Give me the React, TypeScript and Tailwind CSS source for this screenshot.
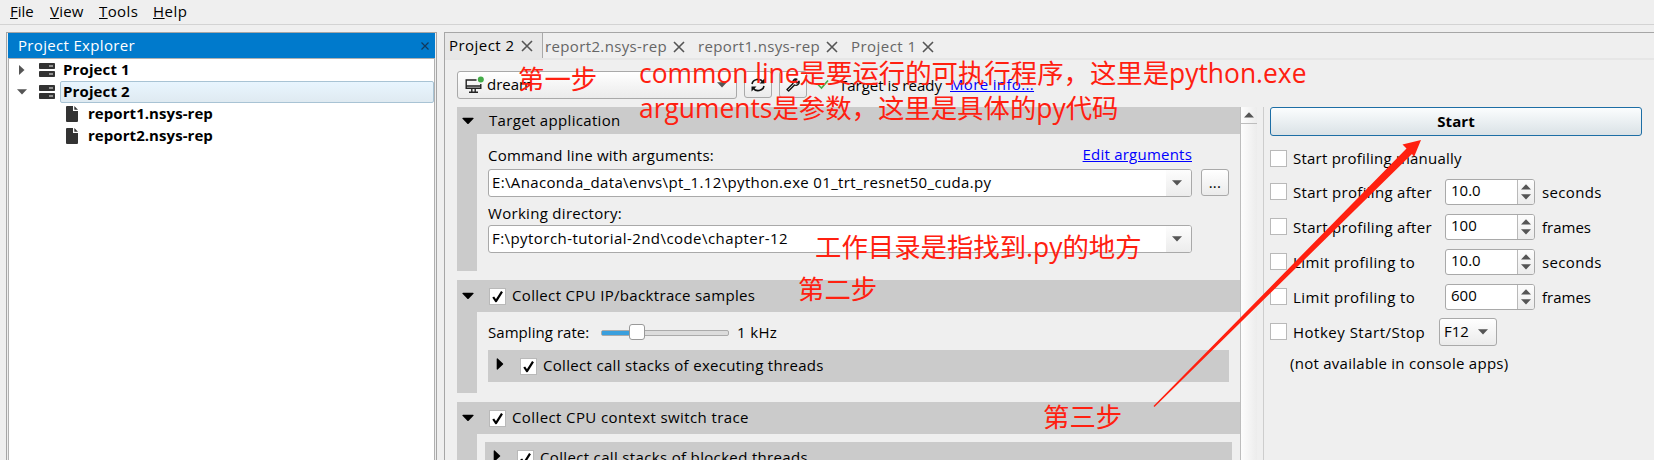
import React from "react";

const T = ({ c = "", children }: { c?: string; children: React.ReactNode }) => (
  <span className={"inline-block -translate-y-px whitespace-pre " + c}>{children}</span>
);
const Note = ({ c, children }: { c: string; children: React.ReactNode }) => (
  <span className={"absolute whitespace-pre " + c}>{children}</span>
);

const Down = ({ c = "text-[#555]" }: { c?: string }) => (
  <svg className={"shrink-0 " + c} width="10" height="6" viewBox="0 0 10 6"><path d="M0 0.3H10L5 5.5Z" fill="currentColor" /></svg>
);
const Up = () => (
  <svg className="shrink-0 text-[#555]" width="10" height="6" viewBox="0 0 10 6"><path d="M0 5.5H10L5 0.3Z" fill="currentColor" /></svg>
);
const BigDown = () => (
  <svg className="shrink-0" width="12" height="8" viewBox="0 0 12 8"><path d="M0.3 1.4Q0.3 0.7 1.2 0.7H10.8Q11.7 0.7 11.7 1.4L6.4 6.9Q6 7.2 5.6 6.9Z" fill="#000" /></svg>
);
const BigRight = () => (
  <svg className="shrink-0" width="8" height="12" viewBox="0 0 8 12"><path d="M1.4 0.3Q0.7 0.3 0.7 1V11Q0.7 11.7 1.4 11.7L7 6.4Q7.5 6 7 5.6Z" fill="#000" /></svg>
);
const Cross = () => (
  <svg className="shrink-0" width="12" height="12" viewBox="0 0 12 12"><path d="M1 1L11 11M11 1L1 11" stroke="#555" strokeWidth="1.6" fill="none" /></svg>
);
const Check = ({ on = false }: { on?: boolean }) => (
  <span className="flex h-[17px] w-[17px] shrink-0 items-center justify-center border border-[#b9b9b9] bg-white">
    {on && <svg width="13" height="13" viewBox="0 0 13 13"><path d="M2.2 7L5 11.2L11 1.6" stroke="#000" strokeWidth="2.2" fill="none" strokeLinejoin="round" /></svg>}
  </span>
);
const Server = () => (
  <svg className="shrink-0" width="16" height="14" viewBox="0 0 16 14">
    <rect width="16" height="6" rx="0.8" fill="#333" /><rect y="8" width="16" height="6" rx="0.8" fill="#333" />
    <rect x="10" y="2.2" width="4" height="1.6" fill="#aaa" /><rect x="10" y="10.2" width="4" height="1.6" fill="#aaa" />
  </svg>
);
const FileIcon = () => (
  <svg className="shrink-0" width="12" height="16" viewBox="0 0 12 16">
    <path d="M1 0H7V5H12V15Q12 16 11 16H1Q0 16 0 15V1Q0 0 1 0Z" fill="#333" /><path d="M8.3 0L12 3.8H8.3Z" fill="#333" />
  </svg>
);

const Combo = ({ text, c }: { text: string; c: string }) => (
  <div className="flex h-7 w-[704px] overflow-hidden rounded-[3px] border border-[#a9a9a9] bg-white">
    <div className="flex flex-1 items-center pl-[3px]"><T c={c}>{text}</T></div>
    <div className="flex w-[25px] items-center justify-center bg-gradient-to-b from-[#fdfdfd] to-[#ececec] pr-1"><Down /></div>
  </div>
);

const Spin = ({ v }: { v: string }) => (
  <div className="flex h-[26px] w-[90px] overflow-hidden rounded-[3px] border border-[#a9a9a9] bg-white">
    <div className="flex w-[71px] items-center pl-[5px] pb-px"><T>{v}</T></div>
    <div className="flex flex-1 flex-col items-center justify-center gap-1 border-l border-[#b9b9b9] bg-gradient-to-b from-[#fdfdfd] to-[#ececec]"><Up /><Down /></div>
  </div>
);

const Option = ({ label, c, v, unit, uc }: { label: string; c: string; v: string; unit: string; uc: string }) => (
  <div className="flex h-[35px] items-center">
    <div className="flex w-[175px] items-center gap-1.5"><Check /><T c={"pt-0.5 " + c}>{label}</T></div>
    <Spin v={v} />
    <T c={"ml-[7px] pt-0.5 " + uc}>{unit}</T>
  </div>
);

export default function App() {
  return (
    <div className="relative flex h-[460px] w-[1654px] flex-col overflow-hidden bg-[#efefef] font-['Open_Sans','Noto_Sans_CJK_SC',sans-serif] text-[15px] leading-5 text-black">
      <div className="flex h-[25px] shrink-0 gap-[14px] border-b border-[#d3d3d3] pl-[10px] pt-[2px]">
        <T c="w-[26px]"><u>F</u>ile</T>
        <T c="w-[35px] tracking-[0.2px]"><u>V</u>iew</T>
        <T c="w-10 tracking-[0.4px]"><u>T</u>ools</T>
        <T c="w-9 tracking-[0.5px]"><u>H</u>elp</T>
      </div>
      <div className="flex flex-1 gap-[7px] pl-[6px] pt-[7px]">
        <div className="flex w-[431px] flex-col border border-b-0 border-[#a6a6a6] px-px">
          <div className="flex h-[25px] items-center justify-between bg-[#007acc] pl-[10px] pr-[6px] text-white">
            <T c="tracking-[0.33px]">Project Explorer</T>
            <svg width="8" height="8" viewBox="0 0 8 8"><path d="M0.5 0.5L7.5 7.5M7.5 0.5L0.5 7.5" stroke="#12395c" strokeWidth="1.2" /></svg>
          </div>
          <div className="flex flex-1 flex-col border border-b-0 border-[#b0b0b0] bg-white font-bold">
            <div className="flex h-[22px] items-center pl-[10px]">
              <svg width="6" height="10" viewBox="0 0 6 10"><path d="M0 0V10L5.5 5Z" fill="#555" /></svg>
              <span className="ml-[14px]"><Server /></span><T c="ml-[8px] tracking-[0.12px]">Project 1</T>
            </div>
            <div className="flex h-[22px] items-center pl-2">
              <Down /><span className="ml-3"><Server /></span>
              <div className="ml-[5px] flex h-[22px] flex-1 items-center rounded-[2px] border border-[#a8c3d4] bg-gradient-to-b from-[#e8f5fe] to-[#dfeaf1] pl-[2px]"><T c="tracking-[0.12px]">Project 2</T></div>
            </div>
            <div className="flex h-[22px] items-center pl-[57px]"><FileIcon /><T c="ml-[10px] tracking-[0.06px]">report1.nsys-rep</T></div>
            <div className="flex h-[22px] items-center pl-[57px]"><FileIcon /><T c="ml-[10px] tracking-[0.06px]">report2.nsys-rep</T></div>
          </div>
        </div>

        <div className="flex flex-1 flex-col border-l border-t border-[#a6a6a6]">
          <div className="flex h-[27px] shrink-0 items-center border-b-2 border-[#e6e6e6] text-[#666]">
            <div className="flex h-full w-[98px] items-center border-r border-[#a9a9a9] bg-[#e7e7e7] pl-1 text-black"><T c="w-[72px] tracking-[0.45px]">Project 2</T><Cross /></div>
            <div className="flex items-center pl-[2px] pt-0.5"><T c="w-[128px] tracking-[0.36px]">report2.nsys-rep</T><Cross /></div>
            <div className="flex items-center pl-[13px] pt-0.5"><T c="w-[128px] tracking-[0.36px]">report1.nsys-rep</T><Cross /></div>
            <div className="flex items-center pl-[13px] pt-0.5"><T c="w-[71px] tracking-[0.45px]">Project 1</T><Cross /></div>
          </div>
          <div className="flex h-[47px] shrink-0 pl-3 pt-[11px]">
            <div className="flex h-7 w-[280px] items-center rounded-[3px] border border-[#a9a9a9] bg-gradient-to-b from-white to-[#ebebeb] pl-[7px] pr-[9px]">
              <svg width="20" height="18" viewBox="0 0 20 18"><path d="M11.5 4H1.2V12.2H15.8V8M1.2 10H15.8M6.8 12.5V16M10.2 12.5V16M4 16.2H13" stroke="#222" strokeWidth="1.4" fill="none" /><circle cx="15.8" cy="3.4" r="3" fill="#43ab47" /></svg>
              <T c="ml-0.5 flex-1">dream</T><Down />
            </div>
            <div className="ml-[7px] flex h-[27px] w-7 items-center justify-center rounded-[3px] border border-[#a9a9a9] bg-gradient-to-b from-white to-[#ebebeb]">
              <svg width="14" height="14" viewBox="0 0 14 14"><path d="M1 6A6 5.5 0 0 1 12 4M13 8A6 5.5 0 0 1 2 10" stroke="#111" strokeWidth="1.6" fill="none" /><path d="M13.5 0.5V5.5H8.5ZM0.5 13.5V8.5H5.5Z" fill="#111" /></svg>
            </div>
            <div className="ml-[7px] flex h-[27px] w-7 items-center justify-center rounded-[3px] border border-[#a9a9a9] bg-gradient-to-b from-white to-[#ebebeb]">
              <svg width="14" height="14" viewBox="0 0 14 14"><path d="M1 11.5L7 5.5A3.2 3.2 0 0 1 10.8 1.2L9 3L11 5L13 3.2A3.2 3.2 0 0 1 8.5 7L2.6 13Z" stroke="#111" strokeWidth="1.4" fill="none" strokeLinejoin="round" /></svg>
            </div>
            <svg className="ml-[9px] mt-[7px]" width="13" height="13" viewBox="0 0 13 13"><path d="M1 5.5L5.5 10L12 2.5" stroke="#43ab47" strokeWidth="1.6" fill="none" /></svg>
            <T c="ml-[10px] mt-[5px] w-[111px]">Target is ready</T>
            <T c="mt-1 text-[#0000ff] underline tracking-[0.35px]">More info...</T>
          </div>

          <div className="flex flex-1 pl-3">
            <div className="flex h-[353px] w-[783px] flex-col overflow-hidden">
              <div className="flex h-[164px] shrink-0 border-l-[20px] border-[#cbcbcb] bg-[#efefef]">
                <div className="flex w-[763px] flex-col">
                  <div className="-ml-[15px] flex h-[27px] items-center bg-[#cbcbcb]"><BigDown /><T c="ml-[15px] tracking-[0.33px]">Target application</T></div>
                  <div className="flex h-[35px] w-[715px] justify-between pl-[11px] pt-[11px]"><T c="mt-px tracking-[0.23px]">Command line with arguments:</T><T c="text-[#0000ff] underline tracking-[0.22px]">Edit arguments</T></div>
                  <div className="flex gap-[9px] pl-[11px]"><Combo text="E:\Anaconda_data\envs\pt_1.12\python.exe 01_trt_resnet50_cuda.py" c="tracking-[0.35px]" /><div className="flex h-[27px] w-7 items-center justify-center rounded-[3px] border border-[#a9a9a9] bg-gradient-to-b from-white to-[#ebebeb]"><T c="tracking-[0.3px]">...</T></div></div>
                  <div className="h-7 pl-[11px] pt-[7px]"><T c="tracking-[0.3px]">Working directory:</T></div>
                  <div className="pl-[11px]"><Combo text="F:\pytorch-tutorial-2nd\code\chapter-12" c="tracking-[0.44px]" /></div>
                </div>
              </div>
              <div className="mt-[9px] flex h-[113px] shrink-0 flex-col border-l-[20px] border-[#cbcbcb]">
                <div className="-ml-[15px] flex h-8 shrink-0 items-center bg-[#cbcbcb]"><BigDown /><span className="ml-[15px]"><Check on /></span><T c="ml-[6px] tracking-[0.33px]">Collect CPU IP/backtrace samples</T></div>
                <div className="flex h-[38px] items-center pl-[11px] pt-[4px]">
                  <T c="w-[113px] tracking-[0.05px]">Sampling rate:</T>
                  <div className="relative h-[6px] w-32 rounded-[2px] border border-[#aaa] bg-[#dcdcdc]">
                    <div className="h-full w-7 bg-[#3a9fdd]" />
                    <div className="absolute -top-[7px] left-[27px] h-4 w-4 rounded-[3px] border border-[#999] bg-white" />
                  </div>
                  <T c="ml-[8px] tracking-[0.35px]">1 kHz</T>
                </div>
                <div className="ml-[11px] flex h-8 w-[741px] items-center bg-[#cbcbcb] pl-2"><span className="-mt-1"><BigRight /></span><span className="ml-4"><Check on /></span><T c="ml-[6px] tracking-[0.32px]">Collect call stacks of executing threads</T></div>
              </div>
              <div className="mt-[9px] flex h-[113px] shrink-0 flex-col border-l-[20px] border-[#cbcbcb]">
                <div className="-ml-[15px] flex h-8 shrink-0 items-center bg-[#cbcbcb]"><BigDown /><span className="ml-[15px]"><Check on /></span><T c="ml-[6px] tracking-[0.4px]">Collect CPU context switch trace</T></div>
                <div className="ml-2 mt-2 flex h-8 w-[747px] items-center bg-[#cbcbcb] pl-2"><span className="-mt-1"><BigRight /></span><span className="ml-4"><Check on /></span><T c="ml-[6px] tracking-[0.34px]">Collect call stacks of blocked threads</T></div>
              </div>
            </div>
            <div className="w-[17px] border-l border-[#bdbdbd] bg-gradient-to-r from-[#fdfdfd] to-[#ececec]"><div className="flex h-[17px] items-center justify-center border-b border-[#bdbdbd]"><Up /></div></div>
            <div className="ml-[6px] flex flex-1 flex-col border-l border-[#cdcdcd] pl-[6px]">
              <div className="flex h-[29px] w-[372px] items-center justify-center rounded-[3px] border border-[#1d6ea5] bg-gradient-to-b from-[#fbfdfe] to-[#dae2e6] font-bold"><T c="tracking-[0.1px]">Start</T></div>
              <div className="flex h-[39px] items-center gap-1.5 pt-[5px]"><Check /><T c="pt-0.5 tracking-[0.23px]">Start profiling manually</T></div>
              <div className="-mt-px flex flex-col">
                <Option label="Start profiling after" c="tracking-[0.3px]" v="10.0" unit="seconds" uc="tracking-[0.35px]" />
                <Option label="Start profiling after" c="tracking-[0.3px]" v="100" unit="frames" uc="" />
                <Option label="Limit profiling to" c="tracking-[0.41px]" v="10.0" unit="seconds" uc="tracking-[0.35px]" />
                <Option label="Limit profiling to" c="tracking-[0.41px]" v="600" unit="frames" uc="" />
              </div>
              <div className="flex h-[35px] items-center"><div className="flex w-[169px] items-center gap-1.5"><Check /><T c="pt-0.5 tracking-[0.5px]">Hotkey Start/Stop</T></div>
                <div className="flex h-7 w-[58px] items-center justify-between rounded-[3px] border border-[#a9a9a9] bg-gradient-to-b from-white to-[#ebebeb] pl-1 pr-2"><T>F12</T><Down /></div>
              </div>
              <T c="ml-5 mt-[5px] tracking-[0.27px]">(not available in console apps)</T>
            </div>
          </div>
        </div>
      </div>

      <div className="pointer-events-none absolute inset-0 text-[26.4px] leading-[35px] text-[#ff2010]">
        <Note c="left-[518px] top-[62px]">第一步</Note>
        <Note c="left-[639px] top-[56px]">common line是要运行的可执行程序，这里是python.exe</Note>
        <Note c="left-[639px] top-[91px]">arguments是参数，这里是具体的py代码</Note>
        <Note c="left-[815px] top-[230px]">工作目录是指找到.py的地方</Note>
        <Note c="left-[798px] top-[272px]">第二步</Note>
        <Note c="left-[1043px] top-[400px]">第三步</Note>
        <svg className="absolute inset-0" width="1654" height="460" viewBox="0 0 1654 460"><path d="M1153.5 406L1406.5 148.5L1402.5 144.5L1421 140L1414 157L1412 154L1154.5 407Z" fill="#ff2010" /></svg>
      </div>
    </div>
  );
}
